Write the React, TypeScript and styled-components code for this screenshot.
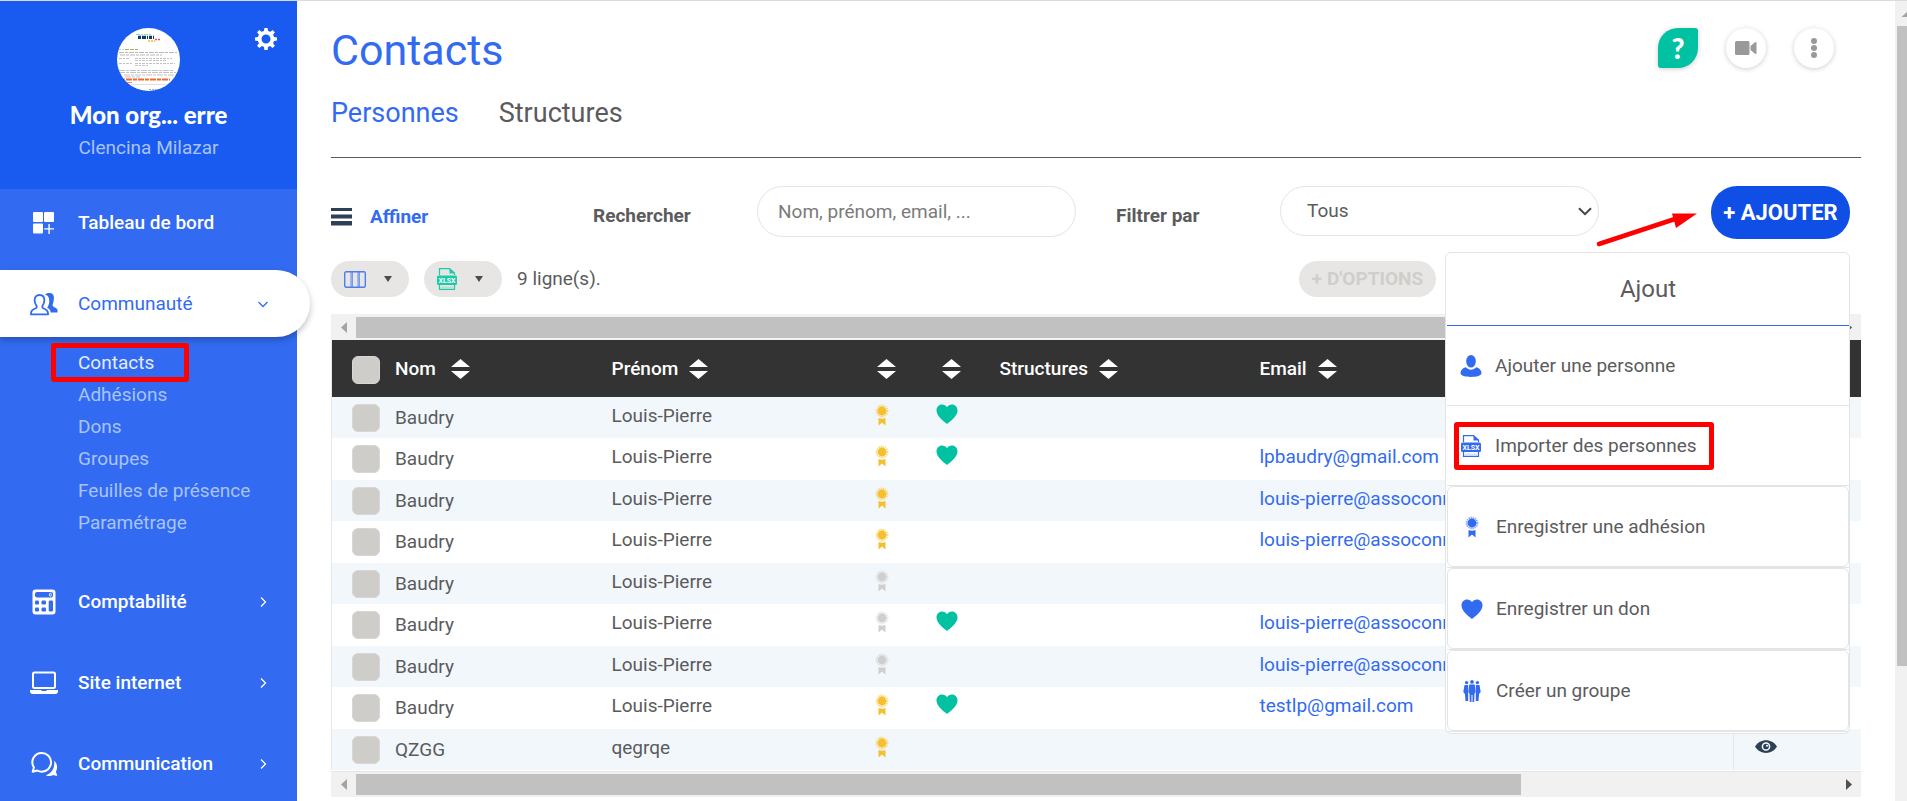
import React from "react";
import styled, { createGlobalStyle, css } from "styled-components";

const blue = "#326bf1";
const grey = "#5b5b5d";

const GlobalStyle = createGlobalStyle`
  *, *::before, *::after { box-sizing: border-box; }
  body {
    margin: 0;
    background: #fff;
    color: ${grey};
    font-family: Roboto, "Liberation Sans", sans-serif;
    font-size: 19px;
    line-height: 24px;
  }
  a { color: inherit; text-decoration: none; }
  button, input, select { font: inherit; color: inherit; }
  button { border: 0; padding: 0; background: none; cursor: pointer; }
  svg { display: block; flex: none; }
`;

const Page = styled.div`
  display: flex;
  min-height: 100vh;
  border-top: 1px solid #dadbe2;
`;

/* Sidebar */

const Sidebar = styled.aside`
  flex: none;
  width: 297px;
  background: ${blue};
  color: #fff;
`;

const Profile = styled.div`
  position: relative;
  display: flex;
  flex-direction: column;
  align-items: center;
  height: 188px;
  padding-top: 27px;
  background: #195bf0;
`;

const SettingsButton = styled.button`
  position: absolute;
  top: 27px;
  right: 20px;
  color: #fff;
`;

const OrgName = styled.strong`
  margin-top: 10px;
  font-family: Lato, Roboto, sans-serif;
  font-size: 24px;
  font-weight: 900;
  line-height: 28px;
`;

const UserName = styled.span`
  margin-top: 7px;
  color: #a9c3fa;
`;

const Nav = styled.nav`
  display: flex;
  flex-direction: column;
  gap: 14px;
`;

const NavItem = styled.a<{ $active?: boolean }>`
  display: flex;
  align-items: center;
  height: 67px;
  padding: 0 29px 0 28px;
  font-weight: 500;
  ${(p) =>
    p.$active &&
    css`
      width: 310px;
      padding-right: 42px;
      border-radius: 0 34px 34px 0;
      background: #fff;
      color: ${blue};
      font-weight: 400;
      box-shadow: 0 3px 6px rgba(0, 0, 0, 0.25);
    `}
`;

const NavIcon = styled.span`
  display: flex;
  justify-content: center;
  width: 32px;
  margin-right: 18px;
`;

const NavLabel = styled.span`
  flex: 1;
`;

const SubMenu = styled.ul`
  margin: -4px 0 15px;
  padding: 0 0 0 78px;
  list-style: none;
`;

const SubItem = styled.li<{ $current?: boolean }>`
  position: relative;
  height: 32px;
  line-height: 32px;
  color: ${(p) => (p.$current ? "#e3ebfd" : "#a9c3fa")};
`;

const Highlight = styled.span<{ $place: "nav" | "menu" }>`
  position: absolute;
  border: 5px solid #f00;
  border-radius: 3px;
  pointer-events: none;
  ${(p) =>
    p.$place === "nav"
      ? css`
          top: -4px;
          left: -27px;
          width: 138px;
          height: 39px;
        `
      : css`
          top: 16px;
          left: 7px;
          width: 260px;
          height: 48px;
        `}
`;

/* Main area */

const Main = styled.main`
  flex: 1;
  min-width: 0;
  padding: 26px 34px 0;
`;

const TopBar = styled.header`
  display: flex;
  justify-content: space-between;
  align-items: flex-start;
`;

const Title = styled.h1`
  margin: 0;
  color: ${blue};
  font-size: 43px;
  font-weight: 400;
  line-height: 46px;
`;

const Actions = styled.div`
  display: flex;
  gap: 28px;
  margin: 1px 27px 0 0;
`;

const RoundButton = styled.button<{ $help?: boolean }>`
  display: flex;
  align-items: center;
  justify-content: center;
  width: 40px;
  height: 40px;
  border-radius: ${(p) => (p.$help ? "20px 3px 20px 3px" : "50%")};
  background: ${(p) => (p.$help ? "#00c2a2" : "#fff")};
  color: ${(p) => (p.$help ? "#fff" : "#999")};
  font-family: Lato, sans-serif;
  font-size: 28px;
  font-weight: 900;
  box-shadow: 0 1px 5px rgba(0, 0, 0, 0.2);
`;

const Tabs = styled.nav`
  display: flex;
  gap: 40px;
  padding: 24px 0 28px;
  border-bottom: 1px solid ${grey};
  font-size: 27px;
  line-height: 32px;
`;

const Tab = styled.a<{ $current?: boolean }>`
  color: ${(p) => (p.$current ? blue : grey)};
`;

const Toolbar = styled.div`
  display: grid;
  grid-template-columns: 262fr 164fr 319fr 204fr 319fr 262fr;
  align-items: start;
  margin-top: 28px;
`;

const Refine = styled.a`
  display: flex;
  align-items: center;
  gap: 18px;
  padding-top: 19px;
  color: ${blue};
  font-weight: 700;
`;

const FieldLabel = styled.label<{ $indent?: boolean }>`
  padding: 18px 0 0 ${(p) => (p.$indent ? 40 : 0)}px;
  font-weight: 700;
`;

const fieldStyle = css`
  width: 100%;
  height: 51px;
  border: 1px solid #e4e4e4;
  border-radius: 26px;
  background: #fff;
  outline: none;
`;

const SearchInput = styled.input`
  ${fieldStyle}
  padding: 0 20px;
  &::placeholder {
    color: #7b7b7b;
    opacity: 1;
  }
`;

const SelectBox = styled.div`
  position: relative;
  svg {
    position: absolute;
    top: 21px;
    right: 7px;
    pointer-events: none;
  }
`;

const Select = styled.select`
  ${fieldStyle}
  height: 50px;
  padding: 0 26px;
  appearance: none;
`;

const AddArea = styled.div`
  position: relative;
  justify-self: end;
  margin-right: 11px;
`;

const AddButton = styled.button`
  width: 139px;
  height: 53px;
  border-radius: 26px;
  background: #0f4fe5;
  color: #fff;
  font-size: 22px;
  font-weight: 700;
  white-space: nowrap;
`;

const Pointer = styled.svg`
  position: absolute;
  top: 24px;
  left: -116px;
  pointer-events: none;
`;

const AddMenu = styled.div`
  position: absolute;
  z-index: 1;
  top: 66px;
  right: 0;
  width: 405px;
  padding: 0 0 1px 1px;
  border: 1px solid #e4e4e4;
  border-radius: 6px;
  background: #fff;
`;

const MenuTitle = styled.h2`
  margin: 0;
  height: 73px;
  border-bottom: 1px solid ${blue};
  font-size: 24px;
  font-weight: 400;
  line-height: 72px;
  text-align: center;
`;

const MenuItem = styled.div`
  position: relative;
  border-bottom: 1px solid #e4e4e4;
`;

const MenuButton = styled.button<{ $boxed?: boolean }>`
  display: flex;
  align-items: center;
  width: 100%;
  height: ${(p) => (p.$boxed ? 81 : 79)}px;
  padding: 0 12px;
  border: ${(p) => (p.$boxed ? 1 : 0)}px solid #e4e4e4;
  border-radius: 6px;
  text-align: left;
`;

const MenuIcon = styled.span`
  display: flex;
  justify-content: center;
  width: 24px;
  margin-right: 12px;
  color: ${blue};
`;

const ListBar = styled.div`
  display: flex;
  align-items: center;
  gap: 15px;
  margin: 22px 0 17px;
`;

const PillButton = styled.button`
  display: flex;
  align-items: center;
  gap: 18px;
  width: 78px;
  height: 36px;
  padding-left: 13px;
  border-radius: 18px;
  background: #e7e6e4;
`;

const OptionsButton = styled.button`
  width: 137px;
  height: 36px;
  margin: 0 425px 0 auto;
  border-radius: 18px;
  background: #e7e6e4;
  color: #cfcecb;
  font-weight: 700;
  white-space: nowrap;
`;

/* Scroll bars */

const HTrack = styled.div<{ $bottom?: boolean }>`
  display: flex;
  align-items: center;
  height: 26px;
  margin-top: ${(p) => (p.$bottom ? 1 : 0)}px;
  background: #f1f1f1;
  border-top: ${(p) => (p.$bottom ? "1px solid #e4e4e4" : "0")};
`;

const TrackEnd = styled.span`
  display: flex;
  justify-content: center;
  width: 25px;
`;

const HThumb = styled.div`
  flex: 1165;
  height: 21px;
  background: #c1c1c1;
`;

const TrackRest = styled.div`
  flex: 315;
`;

const VTrack = styled.div`
  flex: none;
  width: 12px;
  padding: 11px 0 0 2px;
  background: #f1f1f1;
  overflow: hidden;
`;

const VThumb = styled.div`
  height: 640px;
  margin-top: 9px;
  background: #c1c1c1;
`;

/* Table */

const Table = styled.table`
  width: 100%;
  table-layout: fixed;
  border-collapse: collapse;
  border-left: 1px solid #e8e8e8;
`;

const Col = styled.col<{ $w?: number }>`
  width: ${(p) => (p.$w ? `${p.$w}px` : "auto")};
`;

const Th = styled.th`
  height: 57px;
  padding: 0 0 0 16px;
  background: #333;
  color: #fff;
  font-weight: 500;
  text-align: left;
  vertical-align: middle;
  &:first-child { padding-left: 20px; }
  &:nth-child(3), &:nth-child(4) { padding-left: 20px; }
`;

const HeadCell = styled.div`
  display: flex;
  align-items: center;
`;

const SortButton = styled.button<{ $gap?: number }>`
  margin-left: ${(p) => p.$gap ?? 0}px;
  color: #fff;
`;

const Row = styled.tr`
  height: 41px;
  &:nth-child(odd) { background: #f2f7fc; }
  &:nth-child(even) { height: 42px; }
`;

const Td = styled.td`
  padding: 7px 0 0 16px;
  vertical-align: top;
  white-space: nowrap;
  &:first-child { padding-left: 20px; }
  &:last-child {
    padding: 11px 0 0 21px;
    border-left: 1px solid #e3e6ea;
  }
`;

const IconBox = styled.div`
  display: flex;
  justify-content: center;
  width: 18px;
`;

const NameLabel = styled.label`
  display: flex;
  align-items: center;
  gap: 15px;
`;

const Check = styled.input`
  appearance: none;
  width: 28px;
  height: 28px;
  margin: 0;
  border: 1px solid #d8d7d4;
  border-radius: 6px;
  background: #cecdc9;
`;

const HeadCheck = styled(Check)`
  margin: 3px 15px 0 0;
`;

const EmailLink = styled.a`
  color: ${blue};
`;

/* Drawings */

const Avatar = () => (
  <svg width="63" height="63" viewBox="0 0 63 63" role="img" aria-label="Logo">
    <defs>
      <clipPath id="disc"><circle cx="31.5" cy="31.5" r="31.5" /></clipPath>
    </defs>
    <g clipPath="url(#disc)" fill="none">
      <rect width="63" height="63" fill="#fff" />
      <path d="M19 6.5h16" stroke="#8fdcc4" strokeDasharray="4 1 2 1" />
      <path d="M21 9.3h16" stroke="#1c3763" strokeWidth="3.2" strokeDasharray="3 1 4 1 1 1" />
      <path d="M31 13h7" stroke="#f5b83c" strokeWidth="1.5" strokeDasharray="2 1" />
      <path d="M38 11.5h6" stroke="#e0507f" strokeWidth="1.5" strokeDasharray="2 1" />
      <path d="M2 21.5h5" stroke="#bbb" strokeWidth=".7" strokeDasharray="2 1" />
      <path d="M8 21.5h13" stroke="#a8b46a" strokeWidth="1.2" strokeDasharray="4 1" />
      <path d="M2 24.5h58M3 27h42" stroke="#999" strokeWidth=".7" strokeDasharray="5 1 3 1" />
      <path d="M2 30.5h11M18 30.5h37M18 32.5h32M2 35.5h14M18 35.5h40M18 37.5h13" stroke="#999" strokeWidth=".6" strokeDasharray="3 1 2 1" />
      <path d="M2 42.5h55M2 44.5h57M7 47h50M8 49h15" stroke="#999" strokeWidth=".6" strokeDasharray="6 1 3 1" />
      <path d="M4 51.5h49" stroke="#f26a2b" strokeWidth="1.800" strokeDasharray="4 1 6 1" />
      <path d="M10 54.5h5" stroke="#f26a2b" strokeWidth=".8" />
      <path d="M14 56.5h40" stroke="#ccc" strokeWidth=".6" />
      <path d="M32 61.5h8" stroke="#aaa" strokeDasharray="2 1" />
    </g>
  </svg>
);

const Gear = () => (
  <svg width="22" height="22" viewBox="0 0 22 22" fill="currentColor">
    <circle cx="11" cy="11" r="6.4" fill="none" stroke="currentColor" strokeWidth="3.8" />
    {[0, 45, 90, 135, 180, 225, 270, 315].map((a) => (
      <path key={a} d="M8.8 4 9.4 0h3.200l.6 4z" transform={`rotate(${a} 11 11)`} />
    ))}
  </svg>
);

const DashboardIcon = () => (
  <svg width="22" height="22" viewBox="0 0 22 22" fill="#fff">
    <rect x="0" width="10" height="10" rx="1" />
    <rect x="11" width="10" height="10" rx="1" />
    <rect x="0" y="11.5" width="10" height="10" rx="1" />
    <path d="M15.400 12h1.400v4.200H21v1.400h-4.200V22h-1.400v-4.400h-4.200v-1.400h4.200z" />
  </svg>
);

const PeopleIcon = () => (
  <svg width="28" height="24" viewBox="0 0 28 24">
    <path
      d="M15 2.500C16.500.6 21 .2 23 2.400c1.600 2 .8 5 .5 7-.3 2-1.300 2.800-.7 4.600.6 1.400 3.400 1.600 4.300 3 .6 1 .5 2.300.4 3.400h-6.700c-.4-2.600-1.700-3.600-3.600-4.600 1.600-2.600 2.300-5 2-8C19.100 5 17.800 3.500 15 2.500z"
      fill={blue}
    />
    <path
      d="M9.500 3C6.300 3 4.600 5 4.600 8.300c0 2.500.9 4.200 2 5.700.5 1-.2 2-1.300 2.500-2.300.9-4.300 1.800-4.300 4.700v1.100h17v-1.100c0-2.900-2-3.800-4.300-4.700-1.100-.5-1.800-1.500-1.300-2.500 1.100-1.500 2-3.200 2-5.700C14.400 5 12.700 3 9.500 3z"
      fill="#fff" stroke={blue} strokeWidth="1.8"
    />
  </svg>
);

const CalculatorIcon = () => (
  <svg width="24" height="26" viewBox="0 0 24 26">
    <rect x=".5" y=".5" width="23" height="25" rx="3" fill="#fff" />
    <g fill={blue}>
      <rect x="3" y="3" width="18" height="5.5" rx="2" />
      <rect x="3" y="11.5" width="4" height="4" rx="1.3" />
      <rect x="9.5" y="11.5" width="4.5" height="4" rx="1.3" />
      <rect x="3" y="18.5" width="4" height="4" rx="1.3" />
      <rect x="9.5" y="18.5" width="4.5" height="4" rx="1.3" />
      <rect x="16.7" y="11.5" width="4.3" height="11" rx="1.3" />
    </g>
    <ellipse cx="18.3" cy="5.7" rx="1" ry="1.5" fill="none" stroke="#fff" strokeWidth=".9" />
  </svg>
);

const LaptopIcon = () => (
  <svg width="28" height="24" viewBox="0 0 28 24">
    <rect x="3" y="1.5" width="22" height="15.5" rx="1.5" fill="none" stroke="#fff" strokeWidth="2" />
    <path d="M0 19h11l1 1h4l1-1h11v1.500c0 1.500-1 2.500-2.500 2.500h-23C1 23 0 22 0 20.500z" fill="#fff" />
  </svg>
);

const ChatIcon = () => (
  <svg width="27" height="26" viewBox="0 0 27 26">
    <path
      d="M10.800 2a9.300 9.300 0 0 1 0 18.700c-1.700 0-3.200-.4-4.500-1.200L1.700 20.700l1.200-4.300A9.300 9.300 0 0 1 10.800 2z"
      fill="none" stroke="#fff" strokeWidth="2" strokeLinejoin="round"
    />
    <path
      d="M23.200 9.500c3.400 3.700 3.600 7.600 1.700 11.200l1.400 4c-1.400.2-2.700 0-4-.7-2.300 1.300-5.200 1.400-7.500.2 5.800-1.500 9.300-7 8.400-14.700z"
      fill="#fff"
    />
  </svg>
);

const Chevron = ({ down }: { down?: boolean }) => (
  <svg width="10" height="10" viewBox="0 0 10 10" fill="none" stroke="currentColor" strokeWidth="1.300">
    <path d={down ? "M.5 3 5 7.500 9.500 3" : "M3 .5 7.500 5 3 9.500"} />
  </svg>
);

const Medal = ({ color }: { color: string }) => (
  <svg width="18" height="22" viewBox="0 0 18 22" fill={color}>
    <circle cx="9" cy="7" r="5.3" fill="none" stroke={color} strokeWidth="2.2" strokeDasharray="1.400 .68" opacity=".55" />
    <circle cx="9" cy="7" r="4.4" />
    <path d="M5.500 14c2.300 1 4.700 1 7 0v7.500L9 18.500l-3.500 3z" />
  </svg>
);

const Heart = ({ color }: { color: string }) => (
  <svg width="22" height="20" viewBox="0 0 22 20" fill={color}>
    <path d="M11 20C7.500 16.800.5 12.500.5 6.200.5 3 3 .5 6 .5c2 0 4 1 5 2.800C12 1.500 14 .5 16 .5c3 0 5.500 2.500 5.500 5.700 0 6.300-7 10.600-10.500 13.800z" />
  </svg>
);

const Person = () => (
  <svg width="22" height="22" viewBox="0 0 22 22" fill="currentColor">
    <ellipse cx="11" cy="6.3" rx="4.800" ry="6.3" />
    <path d="M5.800 12.200c3 3.300 7.400 3.300 10.400 0 3.300.8 5.300 3.100 5.300 6 0 4.900-21 4.900-21 0 0-2.900 2-5.200 5.300-6z" />
  </svg>
);

const Trio = () => (
  <svg width="18" height="22" viewBox="0 0 18 22" fill="currentColor">
    <circle cx="3.600" cy="2.600" r="1.700" />
    <circle cx="14.400" cy="2.600" r="1.700" />
    <circle cx="9" cy="1.900" r="1.900" />
    <path d="M1.500 5h3.700v16H2.500l-.6-7L.3 12zM16.500 5h-3.700v16h2.700l.6-7 1.600-2z" />
    <path d="M6.300 4.500h5.400l.9 7.500-1.100 1.500-.3 8.500H9.500v-7h-1v7H6.800l-.3-8.500L5.400 12z" />
  </svg>
);

const SheetFile = ({ color }: { color: string }) => (
  <svg width="20" height="22" viewBox="0 0 20 22">
    <path d="M2.500 7V.6h10L17.500 5v2M2.500 16v5.400h15V16" fill="none" stroke={color} strokeWidth="1.200" />
    <path d="M12.500 0 18 5.500h-5.500z" fill={color} />
    <rect y="7.500" width="20" height="9.500" rx="1.500" fill={color} />
    <text x="10" y="15" textAnchor="middle" fill="#fff" fontFamily="Roboto, sans-serif" fontSize="7" fontWeight="700">XLSX</text>
    <path d="M4 19.200h12" stroke={color} strokeWidth=".6" opacity=".5" />
  </svg>
);

const ColumnsIcon = () => (
  <svg width="22" height="17" viewBox="0 0 22 17" fill="none" stroke="#4d7df0" strokeWidth="1.400">
    <rect x=".7" y=".7" width="20.600" height="15.600" rx="1.500" />
    <path d="M7 .7v15.600M8.300.7v15.600M14 .7v15.600M15.300.7v15.600" strokeWidth=".9" />
  </svg>
);

const Caret = () => (
  <svg width="8" height="6" viewBox="0 0 8 6" fill="#4c4c4c"><path d="M0 0h8L4 6z" /></svg>
);

const Bars = () => (
  <svg width="21" height="18" viewBox="0 0 21 18" fill="#2e4057">
    <path d="M0 0h21v3H0zM0 6.500h21v4H0zM0 13h21v4.500H0z" />
  </svg>
);

const SortIcon = () => (
  <svg width="19" height="20" viewBox="0 0 19 20" fill="currentColor">
    <path d="M9.500 0 19 8H0zM9.500 20 0 12h19z" />
  </svg>
);

const Eye = () => (
  <svg width="22" height="13" viewBox="0 0 22 13">
    <path d="M0 6.500C5-2 17-2 22 6.500 17 15 5 15 0 6.500z" fill="#2e4057" />
    <circle cx="11" cy="6.500" r="3.600" fill="none" stroke="#fff" strokeWidth="1.500" />
    <circle cx="12" cy="5.700" r="1" fill="#fff" />
  </svg>
);

const Video = () => (
  <svg width="22" height="14" viewBox="0 0 22 14" fill="currentColor">
    <rect width="14.500" height="14" rx="1.500" />
    <path d="M15.500 5 20 1.300Q21.500.5 21.500 2v10q0 1.500-1.500.7L15.500 9z" />
  </svg>
);

const Dots = () => (
  <svg width="6" height="20" viewBox="0 0 6 20" fill="currentColor">
    <circle cx="3" cy="3" r="3" /><circle cx="3" cy="10" r="3" /><circle cx="3" cy="17" r="3" />
  </svg>
);

const Triangle = ({ dir, color }: { dir: "left" | "right"; color: string }) => (
  <svg width="6" height="11" viewBox="0 0 6 11" fill={color}>
    <path d={dir === "left" ? "M6 0v11L0 5.500z" : "M0 0v11l6-5.500z"} />
  </svg>
);

/* Data */

const subItems = ["Contacts", "Adhésions", "Dons", "Groupes", "Feuilles de présence", "Paramétrage"];

const gold = "#f6c02d";
const pale = "#cfcfcd";
const louis = "louis-pierre@assoconnect.com";

type Contact = { last: string; first: string; medal: string; donor?: boolean; email?: string };

const contacts: Contact[] = [
  { last: "Baudry", first: "Louis-Pierre", medal: gold, donor: true },
  { last: "Baudry", first: "Louis-Pierre", medal: gold, donor: true, email: "lpbaudry@gmail.com" },
  { last: "Baudry", first: "Louis-Pierre", medal: gold, email: louis },
  { last: "Baudry", first: "Louis-Pierre", medal: gold, email: louis },
  { last: "Baudry", first: "Louis-Pierre", medal: pale },
  { last: "Baudry", first: "Louis-Pierre", medal: pale, donor: true, email: louis },
  { last: "Baudry", first: "Louis-Pierre", medal: pale, email: louis },
  { last: "Baudry", first: "Louis-Pierre", medal: gold, donor: true, email: "testlp@gmail.com" },
  { last: "QZGG", first: "qegrqe", medal: gold },
];

const menuItems = [
  { label: "Ajouter une personne", icon: <Person /> },
  { label: "Importer des personnes", icon: <SheetFile color={blue} />, marked: true },
  { label: "Enregistrer une adhésion", icon: <Medal color={blue} />, boxed: true },
  { label: "Enregistrer un don", icon: <Heart color={blue} />, boxed: true },
  { label: "Créer un groupe", icon: <Trio />, boxed: true },
];

const HScroll = ({ bottom }: { bottom?: boolean }) => (
  <HTrack $bottom={bottom} aria-hidden="true">
    <TrackEnd><Triangle dir="left" color="#a3a3a3" /></TrackEnd>
    <HThumb />
    <TrackRest />
    <TrackEnd><Triangle dir="right" color="#505050" /></TrackEnd>
  </HTrack>
);

const Sort = ({ label, gap }: { label: string; gap?: number }) => (
  <SortButton $gap={gap} aria-label={`Trier par ${label}`}><SortIcon /></SortButton>
);

export default function App() {
  return (
    <>
      <GlobalStyle />
      <Page>
        <Sidebar>
          <Profile>
            <SettingsButton aria-label="Paramètres"><Gear /></SettingsButton>
            <Avatar />
            <OrgName>Mon org... erre</OrgName>
            <UserName>Clencina Milazar</UserName>
          </Profile>
          <Nav>
            <NavItem href="#tableau">
              <NavIcon><DashboardIcon /></NavIcon>
              <NavLabel>Tableau de bord</NavLabel>
            </NavItem>
            <NavItem href="#communaute" $active>
              <NavIcon><PeopleIcon /></NavIcon>
              <NavLabel>Communauté</NavLabel>
              <Chevron down />
            </NavItem>
            <SubMenu>
              {subItems.map((item, i) => (
                <SubItem key={item} $current={i === 0}>
                  <a href={`#sub-${i}`}>{item}</a>
                  {i === 0 && <Highlight $place="nav" />}
                </SubItem>
              ))}
            </SubMenu>
            <NavItem href="#comptabilite">
              <NavIcon><CalculatorIcon /></NavIcon>
              <NavLabel>Comptabilité</NavLabel>
              <Chevron />
            </NavItem>
            <NavItem href="#site">
              <NavIcon><LaptopIcon /></NavIcon>
              <NavLabel>Site internet</NavLabel>
              <Chevron />
            </NavItem>
            <NavItem href="#communication">
              <NavIcon><ChatIcon /></NavIcon>
              <NavLabel>Communication</NavLabel>
              <Chevron />
            </NavItem>
          </Nav>
        </Sidebar>

        <Main>
          <TopBar>
            <Title>Contacts</Title>
            <Actions>
              <RoundButton $help>?</RoundButton>
              <RoundButton aria-label="Vidéo"><Video /></RoundButton>
              <RoundButton aria-label="Plus"><Dots /></RoundButton>
            </Actions>
          </TopBar>
          <Tabs>
            <Tab href="#personnes" $current>Personnes</Tab>
            <Tab href="#structures">Structures</Tab>
          </Tabs>

          <Toolbar>
            <Refine href="#affiner"><Bars />Affiner</Refine>
            <FieldLabel htmlFor="search">Rechercher</FieldLabel>
            <SearchInput id="search" type="text" placeholder="Nom, prénom, email, ..." />
            <FieldLabel htmlFor="filter" $indent>Filtrer par</FieldLabel>
            <SelectBox>
              <Select id="filter" defaultValue="Tous"><option>Tous</option></Select>
              <svg width="14" height="9" viewBox="0 0 14 9" fill="none" stroke="#444" strokeWidth="2">
                <path d="M1 1.200l6 6 6-6" />
              </svg>
            </SelectBox>
            <AddArea>
              <AddButton aria-expanded="true">+ AJOUTER</AddButton>
              <Pointer width="104" height="38" viewBox="0 0 104 38" fill="#f00">
                <path d="M4 34 86 7" stroke="#f00" strokeWidth="4.500" strokeLinecap="round" />
                <path d="M102 3.500 77 3.500 81 18z" />
              </Pointer>
              <AddMenu>
                <MenuTitle>Ajout</MenuTitle>
                {menuItems.map((item) => (
                  <MenuItem key={item.label}>
                    <MenuButton $boxed={item.boxed}>
                      <MenuIcon>{item.icon}</MenuIcon>
                      {item.label}
                    </MenuButton>
                    {item.marked && <Highlight $place="menu" />}
                  </MenuItem>
                ))}
              </AddMenu>
            </AddArea>
          </Toolbar>

          <ListBar>
            <PillButton aria-label="Colonnes"><ColumnsIcon /><Caret /></PillButton>
            <PillButton aria-label="Exporter"><SheetFile color="#1cc9a8" /><Caret /></PillButton>
            <span>9 ligne(s).</span>
            <OptionsButton>+ D'OPTIONS</OptionsButton>
          </ListBar>

          <HScroll />
          <Table>
            <colgroup>
              <Col $w={264} />
              <Col $w={261} />
              <Col $w={65} />
              <Col $w={62} />
              <Col $w={260} />
              <Col />
              <Col $w={128} />
            </colgroup>
            <thead>
              <tr>
                <Th>
                  <HeadCell>
                    <HeadCheck type="checkbox" aria-label="Tout sélectionner" />
                    Nom<Sort label="nom" gap={15} />
                  </HeadCell>
                </Th>
                <Th><HeadCell>Prénom<Sort label="prénom" gap={11} /></HeadCell></Th>
                <Th><HeadCell><Sort label="adhésion" /></HeadCell></Th>
                <Th><HeadCell><Sort label="don" /></HeadCell></Th>
                <Th><HeadCell>Structures<Sort label="structure" gap={11} /></HeadCell></Th>
                <Th><HeadCell>Email<Sort label="email" gap={11} /></HeadCell></Th>
                <Th />
              </tr>
            </thead>
            <tbody>
              {contacts.map((c, i) => (
                <Row key={i}>
                  <Td><NameLabel><Check type="checkbox" />{c.last}</NameLabel></Td>
                  <Td>{c.first}</Td>
                  <Td><IconBox><Medal color={c.medal} /></IconBox></Td>
                  <Td><IconBox>{c.donor && <Heart color="#00c2a2" />}</IconBox></Td>
                  <Td />
                  <Td>{c.email && <EmailLink href={`mailto:${c.email}`}>{c.email}</EmailLink>}</Td>
                  <Td><a href={`#contact-${i}`} aria-label="Voir"><Eye /></a></Td>
                </Row>
              ))}
            </tbody>
          </Table>
          <HScroll bottom />
        </Main>

        <VTrack aria-hidden="true">
          <svg width="12" height="5" viewBox="0 0 12 5" fill="#a3a3a3"><path d="M4.500 5 10 0l5 5z" /></svg>
          <VThumb />
        </VTrack>
      </Page>
    </>
  );
}
